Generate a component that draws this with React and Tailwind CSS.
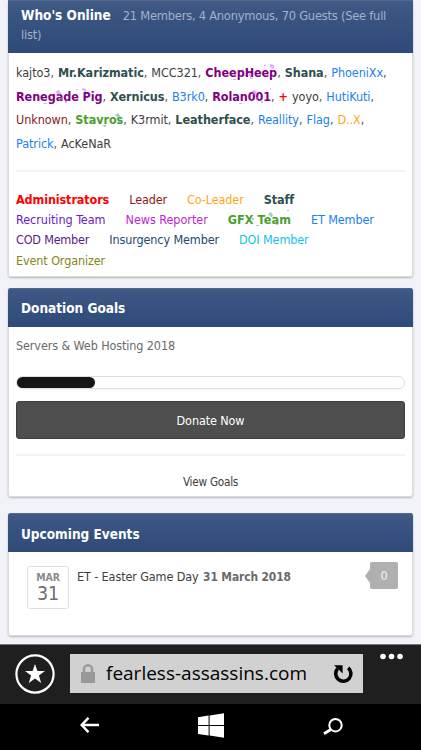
import React from 'react';
import clsx from 'clsx';

const onlineRows = [
    [
        { name: 'kajto3', style: 'text-[#3d3d3d]' },
        { name: 'Mr.Karizmatic', style: 'font-bold text-[#2f4f4f]' },
        { name: 'MCC321', style: 'text-[#3d3d3d]' },
        { name: 'CheepHeep', style: 'font-bold text-[#800080]', sparkle: 'M59 1h2v1h-2zM65 0l4 1v4l-4-2zM44 8h1v2h2v2h-1v2h2v1h-3v-3h-1zM39 11h2v1h-2zM28 15h3v1h-3z', tone: 'text-[#c45cff]' },
        { name: 'Shana', style: 'font-bold text-[#2f4f4f]' },
        { name: 'PhoeniXx', style: 'text-[#2080f0]' },
    ],
    [
        { name: 'Renegade Pig', style: 'font-bold text-[#800080]', sparkle: 'M60 1h2v1h-2zM66 0l4 1v3l-4-2zM40 3l3-1 2 3-1 2h-3zM44 9h2v3h-2zM49 13h2v2h-2zM28 15h3v1h-3z', tone: 'text-[#c45cff]' },
        { name: 'Xernicus', style: 'font-bold text-[#2f4f4f]' },
        { name: 'B3rk0', style: 'text-[#2080f0]' },
        { name: 'Rolan001', style: 'font-bold text-[#800080]', sparkle: 'M58 0h1v2h-1zM40 3l3-1 2 3-1 2h-3zM44 9h2v3h-2zM49 13h2v2h-2zM27 15h3v1h-3z', tone: 'text-[#c45cff]' },
        { name: 'yoyo', style: 'text-[#3d3d3d]', plus: true },
        { name: 'HutiKuti', style: 'text-[#2080f0]' },
    ],
    [
        { name: 'Unknown', style: 'text-[#8b1a1a]' },
        { name: 'Stavros', style: 'font-bold text-[#4aa02c]', sparkle: 'M40 4l3-2 2 3-1 2h-1zM43 9h2v4h-1zM28 14h3v2h-2z', tone: 'text-[#4f9a7c]' },
        { name: 'K3rmit', style: 'text-[#3d3d3d]' },
        { name: 'Leatherface', style: 'font-bold text-[#2f4f4f]' },
        { name: 'Reallity', style: 'text-[#2080f0]' },
        { name: 'Flag', style: 'text-[#2080f0]' },
        { name: 'D..X', style: 'text-[#ffa817]' },
    ],
    [
        { name: 'Patrick', style: 'text-[#2080f0]' },
        { name: 'AcKeNaR', style: 'text-[#3d3d3d]', last: true },
    ],
];

const groupRows = [
    [
        { name: 'Administrators', style: 'font-bold text-[#ff0000]' },
        { name: 'Leader', style: 'text-[#8b1a1a]' },
        { name: 'Co-Leader', style: 'text-[#ffa817]' },
        { name: 'Staff', style: 'font-bold text-[#2f4f4f]' },
    ],
    [
        { name: 'Recruiting Team', style: 'tracking-[-0.04px] text-[#6a1bc4]' },
        { name: 'News Reporter', style: 'tracking-[-0.04px] text-[#bb1fd8]' },
        { name: 'GFX Team', style: 'font-bold tracking-[0.1px] text-[#4aa02c]', sparkle: 'M59 0h2v1h-2zM40 4l3-2 2 3-1 2h-1zM24 8h2v2h-2zM48 12h2v3h-2zM28 15h3v1h-3z', tone: 'text-[#4f9a7c]' },
        { name: 'ET Member', style: 'text-[#2080f0]' },
    ],
    [
        { name: 'COD Member', style: 'tracking-[-0.2px] text-[#5a1a8a]' },
        { name: 'Insurgency Member', style: 'text-[#22496e]' },
        { name: 'DOI Member', style: 'text-[#12c4ee]' },
    ],
    [{ name: 'Event Organizer', style: 'text-[#85851a]' }],
];

// Glitter overlay used by the special member groups
const Sparkle = ({ path, tone }) => (
    <svg className={clsx('absolute -top-px left-0 h-4 w-[72px] opacity-50', tone)} viewBox="0 0 72 16" fill="currentColor">
        <path d={path} />
    </svg>
);

const Label = ({ item }) => (
    <span className={clsx('relative', item.style)}>
        {item.name}
        {item.sparkle && <Sparkle path={item.sparkle} tone={item.tone} />}
    </span>
);

const Panel = ({ title, note, className, children }) => (
    <section className={clsx('mx-2 rounded-[3px] bg-white shadow-[0_1px_2px_rgba(0,0,0,0.25)]', className)}>
        <header className="rounded-t-[3px] bg-linear-to-b from-[#405985] to-[#2e4a79] px-[13px] text-[13.5px] text-[#a4b1ca] inset-shadow-[0_1px_0_#55698f]">
            <h2 className="inline font-bold tracking-normal text-white">{title}</h2>
            {note && <span className="ml-3 text-[12.8px] tracking-[-0.25px]">{note}</span>}
        </header>
        <div className="border-x border-b border-[#dcdcdc] rounded-b-[3px] px-[7px]">{children}</div>
    </section>
);

const WhosOnline = () => (
    <Panel
        title="Who's Online"
        note={<>21 Members, 4 Anonymous, 70 Guests (See full<br />list)</>}
        className="h-[277px] [&>header]:h-[53px] [&>header]:pt-[6px] [&>header]:leading-[19px] [&>header]:rounded-none [&>div]:h-[224px]"
    >
        <div className="pt-[9px] tracking-[-0.06px]">
            {onlineRows.map((row, i) => (
                <div key={i} className="flex h-[23.5px] items-center gap-1 whitespace-nowrap">
                    {row.map((user) => (
                        <span key={user.name} className="text-[#555]">
                            {user.plus && <b className="mr-1 text-[#ff0000]">+</b>}
                            <Label item={user} />
                            {!user.last && ','}
                        </span>
                    ))}
                </div>
            ))}
        </div>
        <hr className="mt-[14px] border-t-2 border-[#f3f3f3]" />
        <div className="mt-[18px]">
            {groupRows.map((row, i) => (
                <div key={i} className="flex h-[20.3px] items-center gap-5 whitespace-nowrap">
                    {row.map((group) => <Label key={group.name} item={group} />)}
                </div>
            ))}
        </div>
    </Panel>
);

const DonationGoals = () => (
    <Panel
        title="Donation Goals"
        className="mt-[11px] h-[209px] [&>header]:h-[39px] [&>header]:leading-[41px] [&>div]:h-[170px]"
    >
        <p className="pt-[10px] leading-[18px] text-[#6a6a6a]">Servers &amp; Web Hosting 2018</p>
        <div className="mt-[21px] flex h-[13px] rounded-full border border-[#dedede] shadow-xs">
            <div className="h-[11px] w-[78px] rounded-full bg-[#161616]" />
        </div>
        <button className="mt-3 flex h-[38px] w-full items-center justify-center rounded-[3px] border border-[#3e3e3e] bg-[#4e4e4e] pt-[2px] text-white">
            Donate Now
        </button>
        <hr className="mt-[15px] border-t-2 border-[#f3f3f3]" />
        <p className="mt-[17px] text-center text-[11.7px] leading-[18px] tracking-[-0.25px] text-[#3d3d3d]">View Goals</p>
    </Panel>
);

const UpcomingEvents = () => (
    <Panel
        title="Upcoming Events"
        className="mt-4 h-[123px] [&>header]:h-[39px] [&>header]:leading-[42px] [&>div]:h-[84px]"
    >
        <div className="flex items-start pl-[11px] pt-[14px]">
            <div className="flex h-[43px] w-[42px] flex-col items-center rounded-[3px] border border-[#dedede] text-[#6f6f6f]">
                <span className="mt-[4px] text-[10.5px] leading-[13px] font-bold text-[#8a8a8a]">MAR</span>
                <span className="text-[19.5px] leading-[20px]">31</span>
            </div>
            <p className="ml-2 mt-[2px] leading-[18px] whitespace-nowrap text-[#3d3d3d]">
                ET - Easter Game Day <b className="ml-px text-[11.9px] text-[#6a6a6a]">31 March 2018</b>
            </p>
            <div className="-mt-[4px] mr-[7px] ml-auto flex items-center">
                <svg className="h-[14px] w-[5px]" viewBox="0 0 5 14" fill="#b0b0b0"><path d="M5 0v14L0 7z" /></svg>
                <span className="flex h-[27px] w-[28px] items-center justify-center rounded-[2px] bg-[#b0b0b0] pt-[2px] text-[#f4f4f4]">0</span>
            </div>
        </div>
    </Panel>
);

const BrowserBar = () => (
    <div className="flex h-[60px] shrink-0 items-start border-t border-[#777] bg-[#1f1f1f]">
        <svg className="mt-[9px] ml-[15px] h-10 w-10" viewBox="0 0 40 40">
            <circle cx="20" cy="20" r="18.6" fill="none" stroke="#fff" strokeWidth="2.2" />
            <path fill="#fff" d="M20 10l2.4 7H30l-6.1 4.4L26.2 29 20 24.5 13.8 29l2.3-7.6L10 17h7.6z" />
        </svg>
        <div className="mt-[9px] ml-[15px] flex h-[39px] w-[293px] items-center bg-[#d1d1d1]">
            <svg className="ml-[11px] h-[19px] w-[14px]" viewBox="0 0 14 19">
                <path fill="none" stroke="#999" strokeWidth="2.4" d="M3 9V5.2a4 4 0 0 1 8 0V9" />
                <path fill="#999" d="M0 8h14v11H0z" />
            </svg>
            <span className="ml-[11px] font-['Open_Sans',sans-serif] text-[19px] tracking-normal whitespace-nowrap text-black">
                fearless-assassins.com
            </span>
            <svg className="mr-[10px] ml-auto h-5 w-5" viewBox="0 0 20 20">
                <path fill="none" stroke="#000" strokeWidth="3.6" d="M15.2 3.8A7.6 7.6 0 1 1 4.6 4.6" />
                <path fill="#000" d="M1 1.2h8.6v8.4l-3-3z" />
            </svg>
        </div>
        <svg className="mt-[8px] ml-[17px] h-[7px] w-[23px]" viewBox="0 0 23 7" fill="#fff">
            <circle cx="3" cy="3.5" r="2.8" />
            <circle cx="11.5" cy="3.5" r="2.8" />
            <circle cx="20" cy="3.5" r="2.8" />
        </svg>
    </div>
);

const NavBar = () => (
    <div className="flex flex-1 items-start bg-black">
        <svg className="mt-[13px] ml-[80px] h-4 w-[19px]" viewBox="0 0 19 16" fill="none" stroke="#fff" strokeWidth="2.4">
            <path d="M1.5 8H19M8.5 .8L1.6 8l6.9 7.2" />
        </svg>
        <svg className="mt-[9px] ml-[99px] h-[25px] w-[26px]" viewBox="0 0 26 25" fill="#fff">
            <path d="M0 4.2l10.6-1.6v9.4H0zM11.6 2.4L26 .3V12H11.6zM0 13h10.6v9.4L0 20.9zM11.6 13H26v11.7l-14.4-2.1z" />
        </svg>
        <svg className="mt-[14px] ml-[99px] h-[17px] w-5" viewBox="0 0 20 17" fill="none" stroke="#fff" strokeWidth="2">
            <circle cx="12.5" cy="7.2" r="6.2" />
            <path strokeWidth="2.8" d="M7.8 11.5L1 15.8" />
        </svg>
    </div>
);

const App = () => (
    <div className="flex h-[750px] w-[421px] flex-col overflow-hidden bg-[#f2f3f8] font-['DejaVu_Sans_Condensed','DejaVu_Sans',sans-serif] text-[12.5px] tracking-[-0.11px]">
        <main className="h-[644px] shrink-0">
            <WhosOnline />
            <DonationGoals />
            <UpcomingEvents />
        </main>
        <BrowserBar />
        <NavBar />
    </div>
);

export default App;
